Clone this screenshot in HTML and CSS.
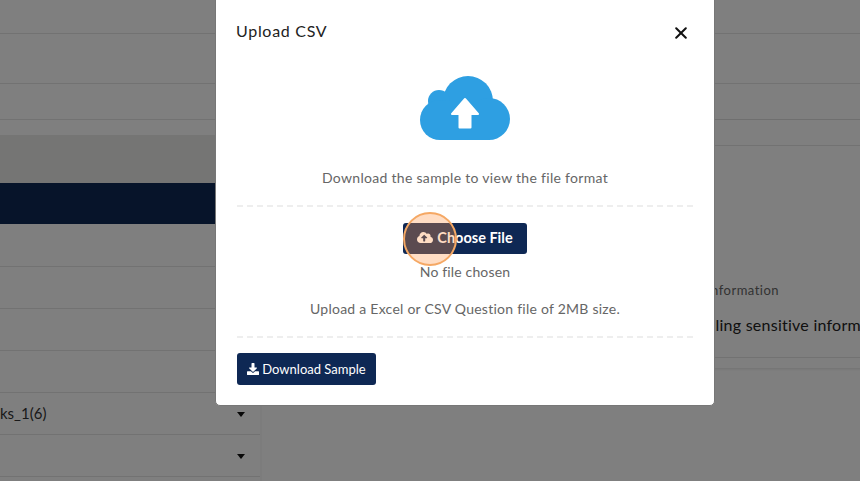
FILE: index.html
```html
<!DOCTYPE html>
<html lang="en">
<head>
  <meta charset="UTF-8" />
  <title>Upload CSV</title>
  <link rel="stylesheet" href="styles.css">
</head>
<body>
  <div class="page">
    <div class="top-row row-a"></div>
    <div class="top-row row-b"></div>
    <div class="top-row row-c"></div>

    <div class="content">
      <div class="left-panel">
        <div class="band"></div>
        <div class="table-head"></div>
        <div class="list-row"></div>
        <div class="list-row"></div>
        <div class="list-row"></div>
        <div class="list-row"></div>
        <div class="list-row"><span>ks_1(6)</span><i class="caret"></i></div>
        <div class="list-row"><span></span><i class="caret"></i></div>
      </div>
      <div class="scrollbar"><div class="thumb"></div></div>
      <div class="right-panel">
        <div class="right-head"></div>
        <div class="right-body">
          <div class="field-label">Information</div>
          <div class="field-value">Revealing sensitive information</div>
        </div>
      </div>
    </div>
  </div>

  <div class="overlay">
    <div class="modal">
      <div class="modal-header">
        <h2>Upload CSV</h2>
        <svg class="close" viewBox="0 0 12 12" width="12" height="12">
          <path d="M1.2 1.2 10.8 10.8M10.8 1.2 1.2 10.8" stroke="#111" stroke-width="2" stroke-linecap="round" fill="none"/>
        </svg>
      </div>

      <svg class="cloud" viewBox="0 0 90 64" width="90" height="64">
        <g fill="#2e9fe2">
          <circle cx="48" cy="25" r="25"/>
          <circle cx="19" cy="25" r="11"/>
          <circle cx="20" cy="44" r="20"/>
          <circle cx="69" cy="43" r="21"/>
          <rect x="20" y="25" width="49" height="39"/>
        </g>
        <path d="M45 23 58 38H50.500V51.500H39.500V38H32Z" fill="#fff" stroke="#fff" stroke-width="2" stroke-linejoin="round"/>
      </svg>

      <p class="hint hint-top">Download the sample to view the file format</p>

      <div class="upload-box">
        <div class="choose-wrap">
          <button class="btn btn-choose">
            <svg viewBox="0 0 640 512" width="16" height="13"><path fill="#fff" d="M537.600 226.600c4.100-10.700 6.400-22.400 6.400-34.600 0-53-43-96-96-96-19.700 0-38.100 6-53.300 16.200C367 64.200 315.300 32 256 32c-88.400 0-160 71.600-160 160 0 2.700.1 5.400.2 8.100C40.200 219.800 0 273.200 0 336c0 79.500 64.500 144 144 144h368c70.700 0 128-57.300 128-128 0-61.900-44-113.600-102.400-125.400zM393.400 288H328v112c0 8.800-7.200 16-16 16h-48c-8.800 0-16-7.200-16-16V288h-65.400c-14.300 0-21.400-17.200-11.300-27.300l105.400-105.400c6.200-6.200 16.400-6.200 22.600 0l105.400 105.400c10.100 10.100 3 27.300-11.300 27.300z"/></svg>
            Choose File
          </button>
          <div class="click-spot"></div>
        </div>
        <p class="hint no-file">No file chosen</p>
        <p class="hint hint-size">Upload a Excel or CSV Question file of 2MB size.</p>
      </div>

      <div class="modal-footer">
        <button class="btn btn-sample">
          <svg viewBox="0 0 512 512" width="12" height="12"><path fill="#fff" d="M216 0h80c13.300 0 24 10.700 24 24v168h87.700c17.800 0 26.700 21.500 14.100 34.100L269.700 378.300c-7.500 7.500-19.800 7.500-27.300 0L90.100 226.100c-12.600-12.600-3.700-34.100 14.100-34.100H192V24c0-13.300 10.700-24 24-24zm296 376v112c0 13.300-10.700 24-24 24H24c-13.300 0-24-10.700-24-24V376c0-13.300 10.700-24 24-24h146.700l49 49c20.100 20.100 52.500 20.100 72.600 0l49-49H488c13.300 0 24 10.700 24 24z"/></svg>
          Download Sample
        </button>
      </div>
    </div>
  </div>
</body>
</html>
```

FILE: styles.css
```css
html, body {
  margin: 0;
  height: 100%;
  overflow: hidden;
}

body {
  font-family: Lato, "Noto Sans", sans-serif;
  background: #fff;
  color: #333;
}

.page {
  height: 481px;
  overflow: hidden;
}

.top-row {
  border-bottom: 1px solid #e4e4e4;
  box-sizing: border-box;
}

.row-a { height: 34px; }
.row-b { height: 50px; }
.row-c { height: 36px; }

.content {
  display: flex;
}

.left-panel {
  width: 276px;
  padding-top: 15px;
}

.band {
  height: 48px;
  background: #ebebe8;
}

.table-head {
  height: 41px;
  margin-bottom: 1px;
  background: #0e2854;
}

.list-row {
  display: flex;
  justify-content: space-between;
  align-items: center;
  box-sizing: border-box;
  width: 260px;
  height: 42px;
  padding: 0 15px 2px 0;
  border-bottom: 1px solid #e4e4e4;
  font-size: 15px;
}

.caret {
  width: 0;
  height: 0;
  margin-top: 3px;
  border-left: 4.500px solid transparent;
  border-right: 4.500px solid transparent;
  border-top: 5px solid #111;
}

.scrollbar {
  width: 15px;
  height: 361px;
  background: #f8f8f8;
}

.thumb {
  height: 332px;
  margin: 0 1px;
  background: #d4d4d4;
}

.right-panel {
  flex: 1;
  height: 248px;
  box-shadow: 0 1px 3px rgba(0,0,0,0.12);
}

.right-head {
  height: 25px;
  border-bottom: 1px solid #e4e4e4;
}

.right-body {
  box-sizing: border-box;
  height: 212px;
  padding: 136px 0 0 410px;
  border-bottom: 1px solid #e4e4e4;
}

.field-label {
  margin-left: 35px;
  font-size: 13px;
  letter-spacing: 0.5px;
  color: #666;
}

.field-value {
  margin-top: 17px;
  font-size: 16px;
  letter-spacing: 0.25px;
  color: #222;
  white-space: nowrap;
}

.overlay {
  position: fixed;
  top: 0;
  left: 0;
  right: 0;
  bottom: 0;
  display: flex;
  align-items: flex-start;
  padding-left: 215px;
  background: rgba(0,0,0,0.5);
}

.modal {
  box-sizing: border-box;
  width: 500px;
  height: 412px;
  margin-top: -6px;
  padding: 10px 21px 0;
  background: #fff;
  border: 1px solid #777;
  border-radius: 5px;
  display: flex;
  flex-direction: column;
  align-items: center;
}

.modal-header {
  align-self: stretch;
  display: flex;
  justify-content: space-between;
  align-items: center;
  height: 50px;
  padding-right: 6px;
}

.modal-header h2 {
  margin: 0 0 0 -1px;
  font-size: 16px;
  font-weight: 400;
  letter-spacing: 0.7px;
  color: #222;
}

.close {
  margin-top: 5px;
}

.cloud {
  margin-top: 21px;
}

.hint {
  margin: 0;
  font-size: 14px;
  letter-spacing: 0.3px;
  color: #666;
}

.hint-top {
  margin-top: 28px;
  line-height: 20px;
  padding-bottom: 17px;
  align-self: stretch;
  text-align: center;
  border-bottom: 2px dashed #eee;
}

.upload-box {
  align-self: stretch;
  display: flex;
  flex-direction: column;
  align-items: center;
  padding: 16px 0 17px;
  border-bottom: 2px dashed #eee;
}

.choose-wrap {
  position: relative;
}

.btn {
  display: flex;
  align-items: center;
  border: none;
  border-radius: 3px;
  background: #0e2854;
  color: #fff;
  font-family: Lato, "Noto Sans", sans-serif;
}

.btn-choose {
  justify-content: center;
  gap: 4px;
  width: 124px;
  height: 31px;
  padding: 0 0 2px;
  font-size: 14.500px;
  font-weight: 700;
}

.click-spot {
  position: absolute;
  left: 0;
  top: -11px;
  box-sizing: border-box;
  width: 54px;
  height: 54px;
  border: 2px solid #f5a864;
  border-radius: 50%;
  background: rgba(255,150,70,0.32);
}

.no-file {
  margin-top: 8px;
  line-height: 20px;
  letter-spacing: 0.15px;
}

.hint-size {
  margin-top: 17px;
  line-height: 20px;
  letter-spacing: 0.25px;
}

.modal-footer {
  align-self: stretch;
  padding-top: 15px;
}

.btn-sample {
  gap: 3px;
  width: 139px;
  height: 32px;
  justify-content: center;
  padding: 0;
  font-size: 13px;
  font-weight: 400;
}
```
